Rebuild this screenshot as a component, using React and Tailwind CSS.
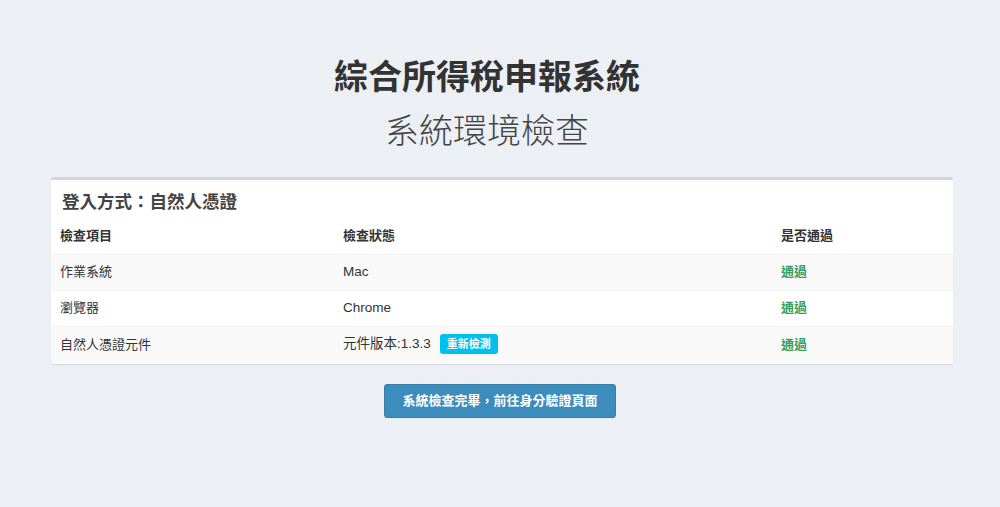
import React from 'react';

const rows = [
  { item: '作業系統', status: 'Mac' },
  { item: '瀏覽器', status: 'Chrome' },
  { item: '自然人憑證元件', status: '元件版本:1.3.3', recheck: true },
];

export default function App() {
  return (
    <div
      className="min-h-[507px] bg-[#ecf0f5] text-[#333] pt-[55px]"
      style={{ fontFamily: '"Liberation Sans", "Noto Sans CJK TC", sans-serif' }}
    >
      <header className="text-center pr-[26px]">
        <h1 className="text-[34px] leading-[44px] font-bold">綜合所得稅申報系統</h1>
        <h2 className="mt-[10px] text-[34px] leading-[44px] font-light text-[#444]">系統環境檢查</h2>
      </header>

      <section className="ml-[51px] mr-[47px] mt-[24px] pb-[2px] bg-white border-t-[3px] border-[#d2d6de] rounded-[3px] shadow-[0_1px_1px_rgba(0,0,0,0.1)]">
        <div className="px-[11px] pt-[12px] pb-[6px]">
          <h3 className="text-[17.5px] leading-[20px] font-bold text-[#444]">登入方式：自然人憑證</h3>
        </div>
        <table className="w-full text-[13px] border-collapse">
          <thead>
            <tr className="h-[36px] text-left">
              <th className="w-[292px] px-[9px] font-bold">檢查項目</th>
              <th className="w-[438px] px-0 font-bold">檢查狀態</th>
              <th className="px-0 font-bold">是否通過</th>
            </tr>
          </thead>
          <tbody>
            {rows.map((r, i) => (
              <tr key={i} className={`h-[36px] border-t border-[#f4f4f4] ${i % 2 === 0 ? 'bg-[#f9f9f9]' : 'bg-white'}`}>
                <td className="px-[9px]">{r.item}</td>
                <td>
                  <span className="inline-flex items-center text-[13.5px]">
                    {r.status}
                    {r.recheck && (
                      <span className="ml-[9px] inline-flex items-center h-[20px] px-[7px] rounded-[3px] bg-[#00c0ef] text-white text-[11px] font-bold">
                        重新檢測
                      </span>
                    )}
                  </span>
                </td>
                <td className="text-[#3a9d5d] font-bold">通過</td>
              </tr>
            ))}
          </tbody>
        </table>
      </section>

      <div className="flex justify-center mt-[20px]">
        <button className="h-[34px] px-[17px] rounded-[3px] bg-[#3c8dbc] text-white text-[13px] font-bold border border-[#367fa9]">
          系統檢查完畢，前往身分驗證頁面
        </button>
      </div>
    </div>
  );
}
